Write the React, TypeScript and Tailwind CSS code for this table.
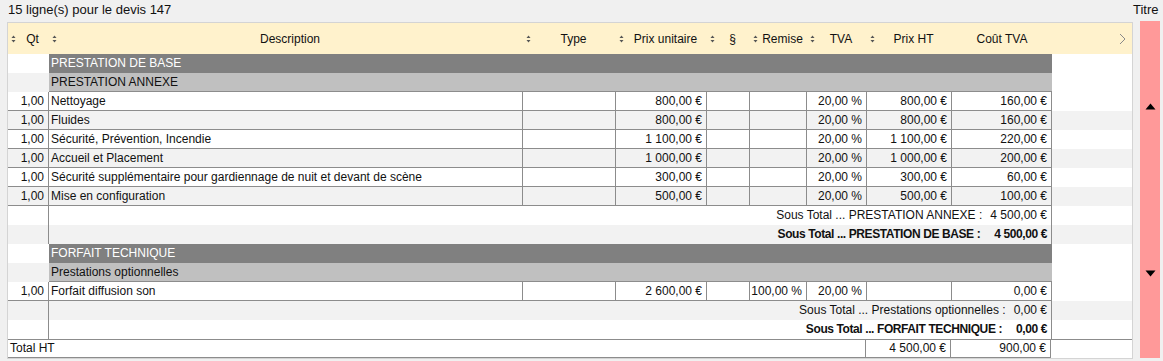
import React from "react";

type Line = {
  kind: "line";
  qt: string;
  desc: string;
  pu: string;
  remise?: string;
  tva: string;
  ht: string;
  cout: string;
};
type Group = { kind: "g1" | "g2"; label: string };
type Sub = { kind: "sub"; label: string; amount: string; bold?: boolean };
type Row = Line | Group | Sub;

const rows: Row[] = [
  { kind: "g1", label: "PRESTATION DE BASE" },
  { kind: "g2", label: "PRESTATION ANNEXE" },
  { kind: "line", qt: "1,00", desc: "Nettoyage", pu: "800,00 €", tva: "20,00 %", ht: "800,00 €", cout: "160,00 €" },
  { kind: "line", qt: "1,00", desc: "Fluides", pu: "800,00 €", tva: "20,00 %", ht: "800,00 €", cout: "160,00 €" },
  { kind: "line", qt: "1,00", desc: "Sécurité, Prévention, Incendie", pu: "1 100,00 €", tva: "20,00 %", ht: "1 100,00 €", cout: "220,00 €" },
  { kind: "line", qt: "1,00", desc: "Accueil et Placement", pu: "1 000,00 €", tva: "20,00 %", ht: "1 000,00 €", cout: "200,00 €" },
  { kind: "line", qt: "1,00", desc: "Sécurité supplémentaire pour gardiennage de nuit et devant de scène", pu: "300,00 €", tva: "20,00 %", ht: "300,00 €", cout: "60,00 €" },
  { kind: "line", qt: "1,00", desc: "Mise en configuration", pu: "500,00 €", tva: "20,00 %", ht: "500,00 €", cout: "100,00 €" },
  { kind: "sub", label: "Sous Total ... PRESTATION ANNEXE :", amount: "4 500,00 €" },
  { kind: "sub", label: "Sous Total ... PRESTATION DE BASE :", amount: "4 500,00 €", bold: true },
  { kind: "g1", label: "FORFAIT TECHNIQUE" },
  { kind: "g2", label: "Prestations optionnelles" },
  { kind: "line", qt: "1,00", desc: "Forfait diffusion son", pu: "2 600,00 €", remise: "100,00 %", tva: "20,00 %", ht: "", cout: "0,00 €" },
  { kind: "sub", label: "Sous Total ... Prestations optionnelles :", amount: "0,00 €" },
  { kind: "sub", label: "Sous Total ... FORFAIT TECHNIQUE :", amount: "0,00 €", bold: true },
];

function SortIcon() {
  return (
    <svg width="5" height="8" viewBox="0 0 5 8" className="shrink-0">
      <path d="M2.5 0.5 L4.5 3 L0.5 3 Z" fill="#555" />
      <path d="M2.5 7.5 L4.5 5 L0.5 5 Z" fill="#555" />
    </svg>
  );
}

function Head({ w, label }: { w: string; label: string }) {
  return (
    <div className={`${w} flex items-center h-full pl-[3px]`}>
      <SortIcon />
      <span className="flex-1 text-center">{label}</span>
    </div>
  );
}

function TableRow({ row, i }: { row: Row; i: number }) {
  const bg = i % 2 === 0 ? "bg-white" : "bg-[#f2f2f2]";
  if (row.kind === "g1" || row.kind === "g2") {
    const tone =
      row.kind === "g1"
        ? "bg-[#808080] text-white"
        : "bg-[#c0c0c0] text-[#111] border-b border-[#8c8c8c]";
    return (
      <div className="flex h-[19px]">
        <div className={`w-[41px] ${bg}`} />
        <div className={`w-[1003px] ${tone} pl-[2px] leading-[18px]`}>{row.label}</div>
      </div>
    );
  }
  if (row.kind === "sub") {
    return (
      <div className={`flex h-[19px] ${bg}`}>
        <div className="w-[41px] border-r border-[#8c8c8c]" />
        <div
          className={`w-[1003px] border-r border-[#8c8c8c] flex justify-end pr-[4px] leading-[18px] ${
            row.bold ? "font-bold tracking-[-0.4px] gap-[14px]" : "gap-[8px]"
          }`}
        >
          <span>{row.label}</span>
          <span>{row.amount}</span>
        </div>
      </div>
    );
  }
  const c = "border-r border-b border-[#8c8c8c] h-full leading-[18px]";
  return (
    <div className={`flex h-[19px] ${bg}`}>
      <div className={`w-[41px] ${c} text-right pr-[4px]`}>{row.qt}</div>
      <div className={`w-[474px] ${c} pl-[2px] whitespace-nowrap`}>{row.desc}</div>
      <div className={`w-[93px] ${c}`} />
      <div className={`w-[91px] ${c} text-right pr-[4px]`}>{row.pu}</div>
      <div className={`w-[43px] ${c}`} />
      <div className={`w-[57px] ${c} text-right pr-[4px]`}>{row.remise ?? ""}</div>
      <div className={`w-[60px] ${c} text-right pr-[4px]`}>{row.tva}</div>
      <div className={`w-[85px] ${c} text-right pr-[4px]`}>{row.ht}</div>
      <div className={`w-[100px] ${c} text-right pr-[4px]`}>{row.cout}</div>
    </div>
  );
}

export default function App() {
  return (
    <div className="w-[1163px] h-[361px] bg-[#f0f0f0] flex text-[12px] text-[#111] font-['Liberation_Sans',sans-serif] overflow-hidden">
      {/* main list */}
      <div className="w-[1133px] pl-[7px] flex flex-col">
        <div className="h-[22px] leading-[20px] pl-[1px] text-[13px]">15 ligne(s) pour le devis 147</div>
        <div className="w-[1126px] h-[337px] border border-[#d4d4d4] bg-white flex flex-col">
          <div className="h-[31px] bg-[#fff2cc] flex items-center">
            <Head w="w-[41px]" label="Qt" />
            <Head w="w-[474px]" label="Description" />
            <Head w="w-[93px]" label="Type" />
            <Head w="w-[91px]" label="Prix unitaire" />
            <Head w="w-[43px]" label="§" />
            <Head w="w-[57px]" label="Remise" />
            <Head w="w-[60px]" label="TVA" />
            <Head w="w-[85px]" label="Prix HT" />
            <div className="w-[100px] h-full flex items-center justify-center">Coût TVA</div>
            <div className="flex-1 flex justify-end pr-[6px]">
              <svg width="7" height="12" viewBox="0 0 7 12">
                <path d="M1 1 L6 6 L1 11" stroke="#8a8a8a" strokeWidth="1" fill="none" />
              </svg>
            </div>
          </div>
          <div className="flex-1 flex flex-col">
            {rows.map((r, i) => (
              <TableRow key={i} row={r} i={i} />
            ))}
            <div className="flex h-[19px] border-t border-[#8c8c8c] bg-white">
              <div className="w-[858px] border-r border-b border-[#8c8c8c] pl-[2px] leading-[17px]">Total HT</div>
              <div className="w-[85px] border-r border-b border-[#8c8c8c] text-right pr-[4px] leading-[17px]">4 500,00 €</div>
              <div className="w-[100px] border-r border-b border-[#8c8c8c] text-right pr-[4px] leading-[17px]">900,00 €</div>
            </div>
          </div>
        </div>
      </div>
      {/* side panel */}
      <div className="w-[30px] flex flex-col">
        <div className="h-[21px] leading-[20px] text-[13px]">Titre</div>
        <div className="ml-[7px] w-[20px] h-[337px] bg-[#ff9999] flex flex-col items-center">
          <svg width="11" height="7" viewBox="0 0 11 7" className="mt-[82px]">
            <path d="M5.5 0.5 L10.5 6.5 L0.5 6.5 Z" fill="#000" />
          </svg>
          <svg width="11" height="7" viewBox="0 0 11 7" className="mt-[160px]">
            <path d="M0.5 0.5 L10.5 0.5 L5.5 6.5 Z" fill="#000" />
          </svg>
        </div>
      </div>
    </div>
  );
}
